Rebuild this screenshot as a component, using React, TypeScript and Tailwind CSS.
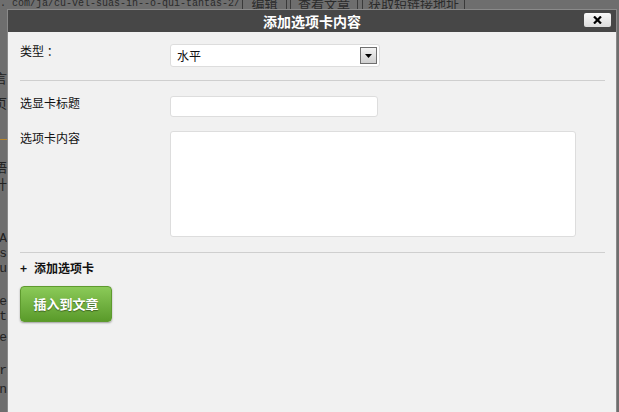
const leftChars = [
  { top: "mt-[62px]", t: "言" },
  { top: "mt-[10px]", t: "页" },
  { top: "mt-[20px]", t: "——" },
  { top: "mt-[14px]", t: "语" },
  { top: "mt-[2px]", t: "计" },
  { top: "mt-[38px]", t: "A" },
  { top: "mt-[0px]", t: "es" },
  { top: "mt-[0px]", t: "u" },
  { top: "mt-[18px]", t: "e" },
  { top: "mt-[0px]", t: "t" },
  { top: "mt-[6px]", t: "e" },
  { top: "mt-[18px]", t: "r" },
  { top: "mt-[4px]", t: "n" },
];

const Backdrop = () => {
  return (
    <div className="w-full h-full flex flex-col">
      <div className="flex items-end h-[10px] overflow-hidden text-[13px] leading-[13px] text-[#2b2b2b] whitespace-nowrap">
        <span className="w-[242px] shrink-0 overflow-hidden font-['Liberation_Mono',monospace] text-[10px] leading-[12px]">
          . com/ja/cu-vel-suas-in--o-qui-tantas-2/
        </span>
        <span className="w-[45px] shrink-0 text-center border-x border-[#3a3a3a] font-['Noto_Sans_CJK_SC',sans-serif]">
          编辑
        </span>
        <span className="ml-[3px] w-[68px] shrink-0 text-center border-x border-[#3a3a3a] font-['Noto_Sans_CJK_SC',sans-serif]">
          查看文章
        </span>
        <span className="ml-[4px] w-[103px] shrink-0 text-center border-x border-[#3a3a3a] font-['Noto_Sans_CJK_SC',sans-serif]">
          获取短链接地址
        </span>
      </div>
      <div className="flex flex-col w-[7px] overflow-hidden text-[13px] leading-[15px] text-[#222] font-['Liberation_Mono','Noto_Sans_CJK_SC',monospace]">
        {leftChars.map((c, i) => (
          <div key={i} className={`flex justify-end whitespace-nowrap ${c.top}`}>
            <span className={c.t === "——" ? "text-[#b8862a]" : ""}>{c.t}</span>
          </div>
        ))}
      </div>
    </div>
  );
};

const Label = ({ children }: { children: React.ReactNode }) => (
  <div className="w-[150px] shrink-0 text-[12px] leading-[14px] text-[#111]">{children}</div>
);

export default function App() {
  return (
    <div className="relative w-[619px] h-[412px] overflow-hidden bg-[#6e6e6e] font-['Noto_Sans_CJK_SC','Liberation_Sans',sans-serif]">
      <Backdrop />

      <div className="absolute left-[7px] top-[9px] w-[610px] h-[410px] border border-[#8a8a8a] bg-[#f1f1f1] flex flex-col">
        <div className="relative h-[22px] bg-[#474747] flex items-center justify-center">
          <span className="text-white font-bold text-[14px] leading-none">添加选项卡内容</span>
          <button className="absolute right-[5px] top-[3px] w-[27px] h-[14px] rounded-[2px] bg-gradient-to-b from-[#fafafa] to-[#dcdcdc] flex items-center justify-center">
            <svg width="9" height="8" viewBox="0 0 9 8">
              <path d="M1 0.5 L8 7.5 M8 0.5 L1 7.5" stroke="#000" strokeWidth="2.2" />
            </svg>
          </button>
        </div>

        <div className="pl-[12px] pr-[11px] pt-[12px] flex flex-col">
          <div className="flex">
            <Label>类型 ：</Label>
            <div className="w-[210px] h-[23px] bg-white border border-[#dddddd] rounded-[3px] flex items-center justify-between pl-[6px] pr-[2px]">
              <span className="text-[12px] text-[#111]">水平</span>
              <div className="w-[17px] h-[17px] border border-[#6f6f6f] bg-gradient-to-b from-[#f4f4f4] to-[#cfcfcf] flex items-center justify-center">
                <svg width="7" height="4" viewBox="0 0 7 4">
                  <path d="M0 0 H7 L3.5 4 Z" fill="#000" />
                </svg>
              </div>
            </div>
          </div>

          <div className="mt-[13px] h-px bg-[#cfcfcf]" />

          <div className="flex mt-[15px]">
            <Label>选显卡标题</Label>
            <div className="w-[208px] h-[21px] bg-white border border-[#dddddd] rounded-[3px]" />
          </div>

          <div className="flex mt-[14px]">
            <Label>选项卡内容</Label>
            <div className="w-[406px] h-[106px] bg-white border border-[#dddddd] rounded-[3px]" />
          </div>

          <div className="mt-[15px] h-px bg-[#cfcfcf]" />

          <div className="mt-[8px] text-[12px] leading-[14px] font-bold text-[#111] flex items-center">
            <span className="w-[14px]">+</span>
            <span>添加选项卡</span>
          </div>

          <button className="mt-[11px] w-[92px] h-[36px] rounded-[4px] border border-[#5e9a2e] bg-gradient-to-b from-[#8bca58] to-[#5a9b2a] shadow-[0_1px_2px_rgba(0,0,0,0.35)] text-white font-bold text-[13px] [text-shadow:0_1px_1px_rgba(0,0,0,0.4)]">
            插入到文章
          </button>
        </div>
      </div>
    </div>
  );
}
